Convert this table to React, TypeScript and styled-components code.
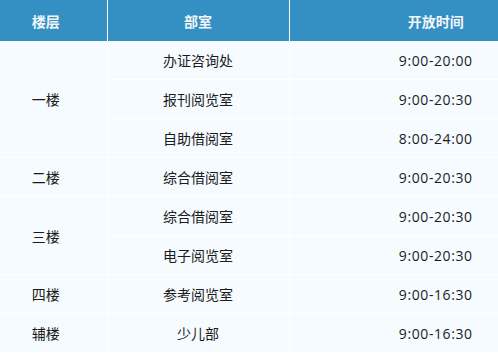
import * as React from 'react';
import styled, {createGlobalStyle} from "styled-components";

const GlobalStyle = createGlobalStyle`
	html, body {
		margin: 0;
		padding: 0;
		background: #f5fbff;
	}
	body {
		font-family: "Noto Sans", "Noto Sans CJK SC", sans-serif;
	}
`;

type Align = 'floor' | 'room' | 'time';

interface IRow {
	floor?: string;
	span?: number;
	room: string;
	time: string;
}

const rows: IRow[] = [
	{floor: '一楼', span: 3, room: '办证咨询处', time: '9:00-20:00'},
	{room: '报刊阅览室', time: '9:00-20:30'},
	{room: '自助借阅室', time: '8:00-24:00'},
	{floor: '二楼', span: 1, room: '综合借阅室', time: '9:00-20:30'},
	{floor: '三楼', span: 2, room: '综合借阅室', time: '9:00-20:30'},
	{room: '电子阅览室', time: '9:00-20:30'},
	{floor: '四楼', span: 1, room: '参考阅览室', time: '9:00-16:30'},
	{floor: '辅楼', span: 1, room: '少儿部', time: '9:00-16:30'},
];

const pad = (align: Align) => {
	if (align === 'floor') return '0 15px 0 0';
	if (align === 'time') return '0 0 0 84px';
	return '0';
};

export default function App() {
	return (
		<>
			<GlobalStyle />
			<Table>
				<colgroup>
					<col style={{width: 107}} />
					<col style={{width: 182}} />
					<col />
				</colgroup>
				<thead>
					<tr>
						<HeadCell $align="floor">楼层</HeadCell>
						<HeadCell $align="room">部室</HeadCell>
						<HeadCell $align="time" $last>开放时间</HeadCell>
					</tr>
				</thead>
				<tbody>
					{rows.map((row, index) => (
						<tr key={index}>
							{row.floor && (
								<Cell $align="floor" rowSpan={row.span}>{row.floor}</Cell>
							)}
							<Cell $align="room">{row.room}</Cell>
							<Cell $align="time" $last>{row.time}</Cell>
						</tr>
					))}
				</tbody>
			</Table>
		</>
	);
}

const Table = styled.table`
	width: 498px;
	table-layout: fixed;
	border-collapse: collapse;
	border-spacing: 0;
	font-size: 14px;
`;

const HeadCell = styled.th<{$align: Align; $last?: boolean}>`
	height: 41px;
	padding: ${p => pad(p.$align)};
	background: #3490c2;
	color: #f2f6fa;
	font-family: "Noto Sans CJK SC", sans-serif;
	font-weight: bold;
	text-align: center;
	border-right: ${p => p.$last ? 'none' : '1px solid #ffffff'};
	box-sizing: border-box;
`;

const Cell = styled.td<{$align: Align; $last?: boolean}>`
	height: 38px;
	padding: ${p => pad(p.$align)};
	color: #1c1c1c;
	text-align: center;
	vertical-align: middle;
	border-right: ${p => p.$last ? 'none' : '1px solid #ffffff'};
	border-bottom: 1px solid #ffffff;
	font-family: ${p => p.$align === 'time' ? '"Open Sans", sans-serif' : '"Noto Sans CJK SC", sans-serif'};
	letter-spacing: ${p => p.$align === 'time' ? '0.6px' : '0'};
`;
